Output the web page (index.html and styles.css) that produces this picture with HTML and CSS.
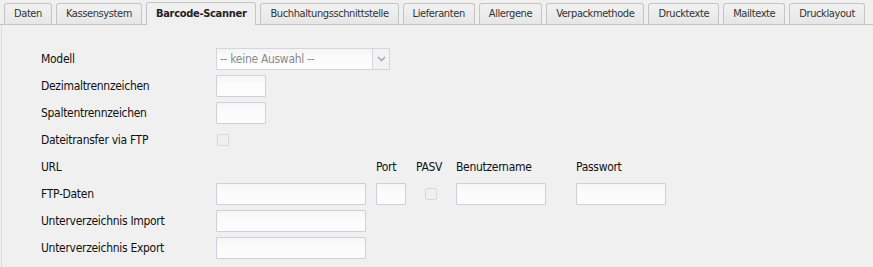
FILE: index.html
```html
<!DOCTYPE html>
<html lang="de">
<head>
<meta charset="utf-8">
<link rel="stylesheet" href="styles.css">
</head>
<body>
<div class="tabs">
  <div class="tab">Daten</div>
  <div class="tab">Kassensystem</div>
  <div class="tab active">Barcode-Scanner</div>
  <div class="tab">Buchhaltungsschnittstelle</div>
  <div class="tab">Lieferanten</div>
  <div class="tab">Allergene</div>
  <div class="tab">Verpackmethode</div>
  <div class="tab">Drucktexte</div>
  <div class="tab">Mailtexte</div>
  <div class="tab">Drucklayout</div>
</div>
<div class="panel">
  <div class="form">
    <div class="label">Modell</div>
    <div class="select span">
      <span class="select-text">-- keine Auswahl --</span>
      <span class="select-btn"><svg width="9" height="6" viewBox="0 0 9 6"><path d="M1 1 L4.5 4.5 L8 1" fill="none" stroke="#aaa" stroke-width="1.6"/></svg></span>
    </div>

    <div class="label">Dezimaltrennzeichen</div>
    <div class="input w50 span"></div>

    <div class="label">Spaltentrennzeichen</div>
    <div class="input w50 span"></div>

    <div class="label">Dateitransfer via FTP</div>
    <div class="cbcell span"><span class="checkbox"></span></div>

    <div class="label">URL</div>
    <div></div>
    <div class="head">Port</div>
    <div class="head">PASV</div>
    <div class="head">Benutzername</div>
    <div class="head">Passwort</div>

    <div class="label">FTP-Daten</div>
    <div class="input w150"></div>
    <div class="input w30"></div>
    <div class="cbcell center"><span class="checkbox"></span></div>
    <div class="input w90"></div>
    <div class="input w90"></div>

    <div class="label">Unterverzeichnis Import</div>
    <div class="input w150 span"></div>

    <div class="label">Unterverzeichnis Export</div>
    <div class="input w150 span"></div>
  </div>
</div>
</body>
</html>
```
FILE: styles.css
```css
html, body {
  margin: 0;
  padding: 0;
  background: #f0f0f0;
}
body {
  font-family: "DejaVu Sans Condensed", "DejaVu Sans", sans-serif;
  font-size: 12px;
  letter-spacing: -0.3px;
  color: #111;
  width: 873px;
  height: 267px;
  overflow: hidden;
}
.tabs {
  display: flex;
  align-items: flex-end;
  gap: 4px;
  padding: 3px 0 0 4px;
  height: 21px;
  border-bottom: 1px solid #c4c4c4;
}
.tab {
  height: 20px;
  line-height: 20px;
  padding: 0 9px;
  border: 1px solid #c4c4c4;
  border-bottom: none;
  border-radius: 3px 3px 0 0;
  background: linear-gradient(#f2f2f2, #e6e6e6);
  color: #333;
  font-size: 11px;
  letter-spacing: -0.4px;
  white-space: nowrap;
}
.tab.active {
  height: 22px;
  line-height: 22px;
  margin-bottom: -1px;
  background: #f0f0f0;
  font-weight: bold;
  letter-spacing: -0.3px;
  color: #222;
}
.panel {
  border-left: 1px solid #dcdcdc;
  margin-left: 1px;
  height: 242px;
  padding: 23px 0 0 39px;
  box-sizing: border-box;
}
.form {
  display: grid;
  grid-template-columns: 165px 150px 30px 30px 110px 90px;
  grid-auto-rows: 22px;
  column-gap: 10px;
  row-gap: 5px;
  align-items: center;
}
.label {
  grid-column: 1;
  white-space: nowrap;
}
.span {
  grid-column: 2 / -1;
}
.head {
  white-space: nowrap;
}
.input {
  height: 22px;
  box-sizing: border-box;
  border: 1px solid #cdd0d8;
  border-radius: 1px;
  background: linear-gradient(#f6f6f6, #fbfbfb 40%, #fdfdfd);
}
.w50 { width: 50px; }
.w30 { width: 30px; }
.w90 { width: 90px; }
.w150 { width: 150px; }
.select {
  width: 174px;
  height: 22px;
  box-sizing: border-box;
  display: flex;
  border: 1px solid #d4d6dc;
  background: linear-gradient(#f4f4f4, #fbfbfb 40%, #fdfdfd);
}
.select-text {
  flex: 1;
  padding-left: 3px;
  line-height: 20px;
  color: #8a8a8a;
  border-right: 1px solid #d4d6dc;
}
.select-btn {
  width: 16px;
  display: flex;
  align-items: center;
  justify-content: center;
  background: #f2f2f2;
}
.cbcell {
  display: flex;
  align-items: center;
  height: 22px;
}
.cbcell.center {
  justify-content: center;
}
.checkbox {
  display: block;
  width: 12px;
  height: 12px;
  box-sizing: border-box;
  margin-left: 1px;
  border: 1px solid #d8d8d8;
  border-radius: 2px;
  background: #f0f0f0;
}
.cbcell.center .checkbox {
  margin-left: 0;
}
```
